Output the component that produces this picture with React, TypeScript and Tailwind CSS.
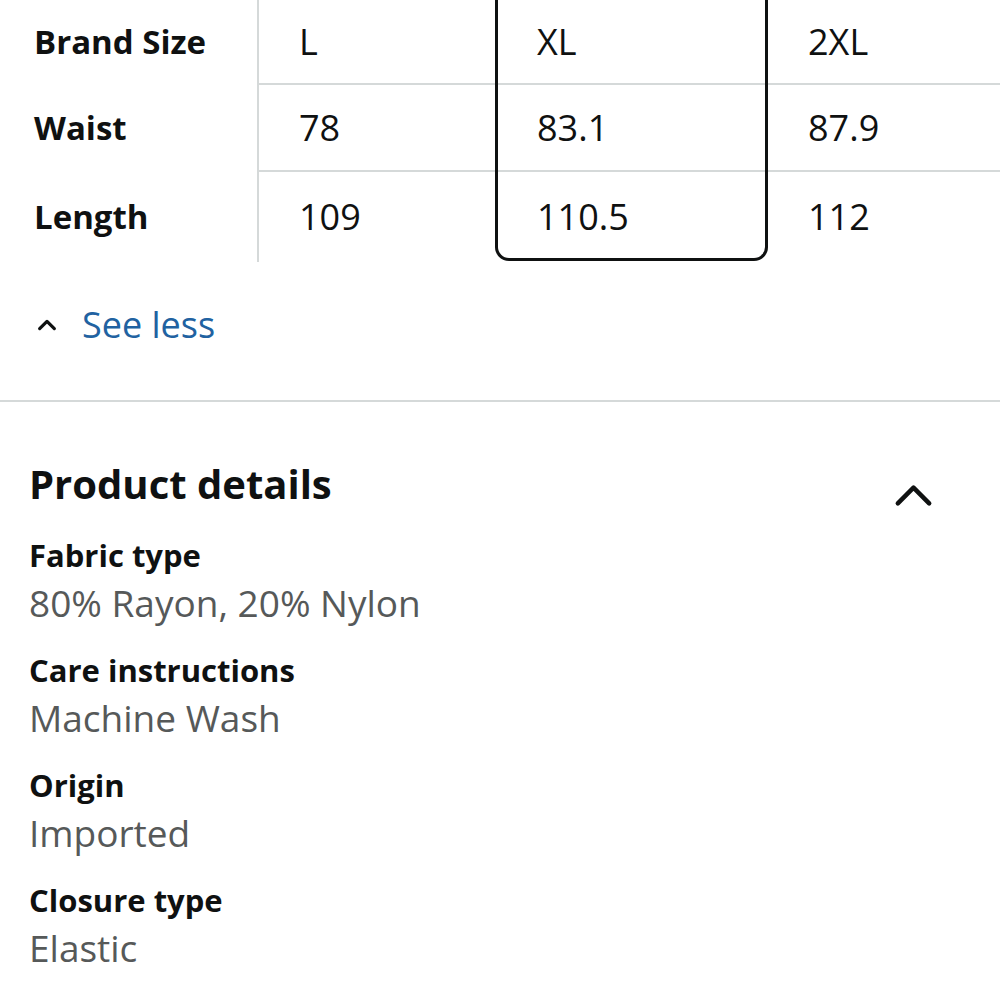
import React from 'react';

const sizes = [
    { label: 'Brand Size', values: ['L', 'XL', '2XL'] },
    { label: 'Waist', values: ['78', '83.1', '87.9'] },
    { label: 'Length', values: ['109', '110.5', '112'] },
];

const details = [
    { name: 'Fabric type', value: '80% Rayon, 20% Nylon' },
    { name: 'Care instructions', value: 'Machine Wash' },
    { name: 'Origin', value: 'Imported' },
    { name: 'Closure type', value: 'Elastic' },
];

const rowHeights = ['h-[85px] border-b-2', 'h-[87px] border-b-2', 'h-[90px]'];

const ChevronUp: React.FC<{ className?: string; strokeWidth?: number }> = ({ className, strokeWidth = 3 }) => (
    <svg viewBox="0 0 24 24" className={className} fill="none" stroke="currentColor" strokeWidth={strokeWidth} strokeLinecap="round" strokeLinejoin="round">
        <polyline points="4,16 12,8 20,16" />
    </svg>
);

const App: React.FC = () => {
    const col = (i: number) => (
        <>
            {sizes.map((row, r) => (
                <div key={r} className={`${rowHeights[r]} border-[#d5d9d9] flex items-center pl-[40px] text-[36px]`}>
                    {row.values[i]}
                </div>
            ))}
        </>
    );

    return (
        <div className="w-[1000px] h-[1000px] bg-white text-[#0f1111] overflow-hidden" style={{ fontFamily: '"Open Sans", "Noto Sans", sans-serif' }}>
            {/* size chart */}
            <div className="flex">
                <div className="w-[259px] border-r-2 border-[#d5d9d9] h-[262px]">
                    {sizes.map((row, r) => (
                        <div key={r} className={`${rowHeights[r]} border-transparent flex items-center pl-[34px] text-[33px] font-bold`}>
                            {row.label}
                        </div>
                    ))}
                </div>
                <div className="w-[236px]">{col(0)}</div>
                <div className="w-[273px] border-[3px] border-t-0 border-[#0f1111] rounded-b-[14px] h-[261px] overflow-hidden">
                    <div className="-mx-px">{col(1)}</div>
                </div>
                <div className="flex-1">{col(2)}</div>
            </div>

            {/* see less */}
            <div className="flex items-center h-[126px] pl-[36px] gap-[24px]">
                <ChevronUp className="w-[22px] h-[22px]" strokeWidth={3.5} />
                <span className="text-[#2162a1] text-[36px]">See less</span>
            </div>
            <div className="h-[2px] bg-[#d5d9d9] mt-[12px]" />

            {/* product details */}
            <div className="px-[29px] pt-[46px]">
                <div className="flex items-center justify-between">
                    <h2 className="text-[40px] font-bold leading-[48px]">Product details</h2>
                    <ChevronUp className="w-[47px] h-[47px] mr-[34px] mt-[24px]" strokeWidth={2.3} />
                </div>
                <div className="mt-[12px]">
                    {details.map((d) => (
                        <div key={d.name} className="h-[115px] pt-[2px]">
                            <div className="text-[31px] font-bold leading-[44px]">{d.name}</div>
                            <div className="text-[37px] leading-[52px] text-[#565959]">{d.value}</div>
                        </div>
                    ))}
                </div>
            </div>
        </div>
    );
};

export default App;
